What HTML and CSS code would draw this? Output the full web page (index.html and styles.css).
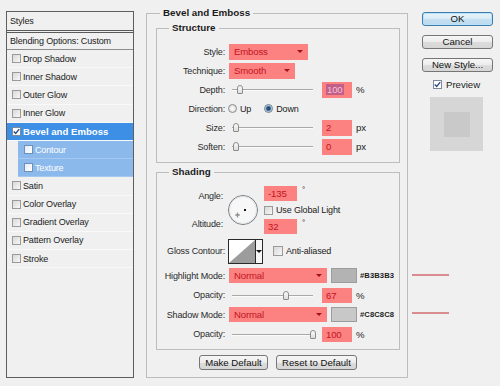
FILE: index.html
```html
<!DOCTYPE html>
<html>
<head>
<meta charset="utf-8">
<title>Layer Style</title>
<link rel="stylesheet" href="styles.css">
</head>
<body>
<div class="dialog">
  <aside class="styles-panel">
    <div class="panel-head">Styles</div>
    <div class="panel-blend">Blending Options: Custom</div>
    <ul class="effect-list">
      <li class="effect"><span class="cb"></span>Drop Shadow</li>
      <li class="effect"><span class="cb"></span>Inner Shadow</li>
      <li class="effect"><span class="cb"></span>Outer Glow</li>
      <li class="effect"><span class="cb"></span>Inner Glow</li>
      <li class="effect selected"><span class="cb checked"><svg viewBox="0 0 9 9" width="7" height="7"><path d="M1 4.5 L3.5 7 L8 1.5" fill="none" stroke="#2b4a86" stroke-width="1.8"/></svg></span>Bevel and Emboss</li>
      <li class="effect sub"><span class="cb light"></span>Contour</li>
      <li class="effect sub"><span class="cb light"></span>Texture</li>
      <li class="effect"><span class="cb"></span>Satin</li>
      <li class="effect"><span class="cb"></span>Color Overlay</li>
      <li class="effect"><span class="cb"></span>Gradient Overlay</li>
      <li class="effect"><span class="cb"></span>Pattern Overlay</li>
      <li class="effect"><span class="cb"></span>Stroke</li>
    </ul>
  </aside>

  <main class="main">
    <fieldset class="group bevel">
      <legend class="legend legend-outer">Bevel and Emboss</legend>

      <fieldset class="group structure">
        <legend class="legend">Structure</legend>
        <div class="row">
          <span class="lbl">Style:</span>
          <div class="select w-style"><span>Emboss</span><i class="arrow"></i></div>
        </div>
        <div class="row">
          <span class="lbl">Technique:</span>
          <div class="select w-tech"><span>Smooth</span><i class="arrow"></i></div>
        </div>
        <div class="row">
          <span class="lbl">Depth:</span>
          <div class="slider"><i class="thumb" style="left:5px"></i></div>
          <div class="field"><span class="sel">100</span></div><span class="unit">%</span>
        </div>
        <div class="row">
          <span class="lbl">Direction:</span>
          <span class="radio"></span><span class="radio-text">Up</span>
          <span class="radio checked gap-radio"></span><span class="radio-text">Down</span>
        </div>
        <div class="row">
          <span class="lbl">Size:</span>
          <div class="slider"><i class="thumb" style="left:1px"></i></div>
          <div class="field">2</div><span class="unit">px</span>
        </div>
        <div class="row">
          <span class="lbl">Soften:</span>
          <div class="slider"><i class="thumb" style="left:1px"></i></div>
          <div class="field">0</div><span class="unit">px</span>
        </div>
      </fieldset>

      <fieldset class="group shading">
        <legend class="legend">Shading</legend>
        <div class="shade-grid">
          <div class="angle">
            <span class="lbl a-lbl1">Angle:</span>
            <svg class="dial" viewBox="0 0 32 32" width="32" height="32">
              <circle cx="16" cy="16" r="14.5" fill="#f7f7f7" stroke="#707a84" stroke-width="1"/>
              <circle cx="16" cy="16" r="13.5" fill="none" stroke="#e2e2e2" stroke-width="1"/>
              <rect x="17" y="15" width="2" height="2" fill="#111"/>
              <path d="M10.5 18.5 V23.5 M8 21 H13" stroke="#8a8a8a" stroke-width="1"/>
              <circle cx="10.5" cy="21" r="1.3" fill="none" stroke="#9a9a9a" stroke-width="0.8"/>
            </svg>
            <div class="a-field1"><div class="field wide">-135</div><span class="deg">°</span></div>
            <div class="a-check"><span class="cb"></span><span>Use Global Light</span></div>
            <span class="lbl a-lbl2">Altitude:</span>
            <div class="a-field2"><div class="field wide">32</div><span class="deg">°</span></div>
          </div>

          <div class="row tall">
            <span class="lbl">Gloss Contour:</span>
            <div class="gloss">
              <svg viewBox="0 0 26 23" width="26" height="23" preserveAspectRatio="none"><rect width="26" height="23" fill="#fff"/><path d="M0 23 L26 0 L26 23 Z" fill="#9c9c9c"/></svg>
              <span class="gloss-drop"><i class="arrow dark"></i></span>
            </div>
            <span class="cb aa"></span><span>Anti-aliased</span>
          </div>

          <div class="row">
            <span class="lbl">Highlight Mode:</span>
            <div class="select w-mode"><span>Normal</span><i class="arrow"></i></div>
            <span class="swatch hl"></span><span class="hex">#B3B3B3</span>
          </div>
          <div class="row">
            <span class="lbl">Opacity:</span>
            <div class="slider"><i class="thumb" style="left:51px"></i></div>
            <div class="field">67</div><span class="unit">%</span>
          </div>
          <div class="row">
            <span class="lbl">Shadow Mode:</span>
            <div class="select w-mode"><span>Normal</span><i class="arrow"></i></div>
            <span class="swatch sh"></span><span class="hex">#C8C8C8</span>
          </div>
          <div class="row">
            <span class="lbl">Opacity:</span>
            <div class="slider"><i class="thumb" style="left:78px"></i></div>
            <div class="field">100</div><span class="unit">%</span>
          </div>
        </div>
      </fieldset>

      <div class="actions">
        <button class="btn b-make">Make Default</button>
        <button class="btn b-reset">Reset to Default</button>
      </div>
    </fieldset>
  </main>

  <div class="side">
    <button class="btn ok">OK</button>
    <button class="btn s-gap">Cancel</button>
    <button class="btn s-gap">New Style...</button>
    <div class="preview-row"><span class="cb checked white"><svg viewBox="0 0 9 9" width="7" height="7"><path d="M1 4.5 L3.5 7 L8 1.5" fill="none" stroke="#2b4a86" stroke-width="1.8"/></svg></span><span>Preview</span></div>
    <div class="preview"><div class="preview-inner"></div></div>
  </div>

  <i class="pointer p1"></i>
  <i class="pointer p2"></i>
</div>
</body>
</html>
```
FILE: styles.css
```css
* { box-sizing: border-box; }
html, body { margin: 0; padding: 0; }
body {
  width: 500px; height: 386px; overflow: hidden;
  background: #f0f0f0;
  font-family: "Liberation Sans", Arial, sans-serif;
  font-size: 9px; letter-spacing: -0.15px; color: #222;
}
.dialog { position: relative; display: flex; align-items: flex-start; height: 386px; }

/* ---- left styles panel ---- */
.styles-panel {
  margin: 11px 0 0 6px; width: 128px; height: 367px;
  border: 1px solid #5e5e5e; background: #f0f0f0;
}
.panel-head { height: 21px; line-height: 18px; padding-left: 3px; border-bottom: 3px double #5a5a5a; }
.panel-blend { height: 17px; line-height: 16px; padding-left: 3px; border-bottom: 1px solid #8c8c8c; }
.effect-list { list-style: none; margin: 0; padding: 0; }
.effect {
  height: 18.2px; display: flex; align-items: center; padding-left: 5px;
  border-bottom: 1px solid #f9f9f9; white-space: nowrap;
}
.effect.selected { background: #3d8fe6; color: #fff; font-weight: bold; font-size: 9.6px; letter-spacing: 0; }
.effect.sub { margin-left: 11px; padding-left: 6px; background: #8cb9eb; color: #fff; border-bottom-color: #a4c8f0; }
.cb {
  flex: none; width: 9px; height: 9px; margin-right: 2px;
  border: 1px solid #9a9a9a;
  background: linear-gradient(135deg, #d8d8d8, #f7f7f7);
  display: inline-flex; align-items: center; justify-content: center;
}
.cb.checked { background: #fff; border-color: #7c8a99; }
.cb.light { background: linear-gradient(135deg, #e4ecf6, #ffffff); border-color: #6f8fb8; }

/* ---- main group ---- */
.group { margin: 0; min-width: 0; border: 1px solid #bdbdbd; }
.legend { font-weight: bold; font-size: 9.8px; letter-spacing: 0; padding: 0 3px; margin-left: 12px; line-height: 12px; color: #1c1c1c; }
.legend-outer { margin-left: 4px; }
.bevel { margin: 7px 0 0 12px; width: 262px; height: 371px; padding: 3px 7px 0 9px; }
.structure { width: 244px; height: 141px; padding: 8px 0 0 0; }
.shading { width: 244px; height: 184px; margin-top: 3px; padding: 8px 0 0 0; }

.row { display: flex; align-items: center; height: 19px; white-space: nowrap; }
.shade-grid .row { height: 15px; }
.shade-grid .row.tall { height: 25px; }
.shade-grid { display: flex; flex-direction: column; gap: 4.5px; }
.lbl { flex: none; width: 68px; margin-right: 4px; text-align: right; color: #2a2a2a; }

.select {
  flex: none; height: 16px; display: flex; align-items: center; justify-content: space-between;
  padding: 0 5px 0 5px; background: #fc8181; color: #c4141e; font-size: 9.6px;
}
.shade-grid .select { height: 15px; }
.w-style { width: 79px; }
.w-tech { width: 66px; }
.w-mode { width: 98px; }
.arrow { display: block; width: 0; height: 0; border-left: 3px solid transparent; border-right: 3px solid transparent; border-top: 3px solid #a2101a; }
.arrow.dark { border-top-color: #111; }

.slider { position: relative; flex: none; width: 81px; height: 11px; margin: 0 9px 0 3px; }
.slider::before { content: ""; position: absolute; left: 0; right: 0; top: 5px; height: 1px; background: #a9a9a9; box-shadow: 0 1px 0 #fbfbfb; }
.thumb {
  position: absolute; top: 1px; width: 6px; height: 9px;
  border: 1px solid #8c8c8c; border-radius: 3px 3px 1px 1px;
  background: linear-gradient(#fbfbfb, #dedede);
}
.field {
  flex: none; width: 30px; height: 15px; padding-left: 4px;
  display: flex; align-items: center; background: #fc8181; color: #c4141e; font-size: 9.6px;
}
.structure .field { height: 16px; }
.field.wide { width: 33px; }
.sel { background: #c0608a; color: #f6bfd0; padding: 0 1px; line-height: 11px; }
.unit { margin-left: 4px; font-size: 9.6px; color: #222; }
.deg { margin-left: 5px; align-self: flex-start; font-size: 8px; line-height: 8px; }

.radio {
  flex: none; width: 9px; height: 9px; border-radius: 50%;
  border: 1px solid #8b8b8b; background: radial-gradient(circle, #fff, #d4d4d4);
  margin-left: -1px;
}
.radio.checked { background: radial-gradient(circle, #234f78 0 1.8px, #6f93b3 2.4px, #e9eef3 3.6px); border-color: #6d7f90; }
.gap-radio { margin-left: 13px; }
.radio-text { margin-left: 3px; }

/* angle block */
.angle { display: grid; grid-template-columns: 70px 37px auto; grid-template-rows: 15px 18px 15px; align-items: center; }
.angle .lbl { width: 70px; margin: 0; padding-right: 4px; }
.a-lbl1 { grid-column: 1; grid-row: 1; align-self: end; }
.a-lbl2 { grid-column: 1; grid-row: 3; align-self: start; }
.dial { grid-column: 2; grid-row: 1 / 4; align-self: center; }
.a-field1 { grid-column: 3; grid-row: 1; display: flex; height: 15px; }
.a-check { grid-column: 3; grid-row: 2; display: flex; align-items: center; white-space: nowrap; }
.a-check .cb { margin-right: 3px; }
.a-field2 { grid-column: 3; grid-row: 3; display: flex; height: 15px; }

.gloss { flex: none; display: flex; width: 35px; height: 25px; border: 1px solid #2a2a2a; background: #fff; margin-left: -1px; }
.gloss svg { display: block; }
.gloss-drop { flex: 1; display: flex; align-items: center; justify-content: center; border-left: 1px solid #2a2a2a; background: #f6f6f6; }
.cb.aa { margin-left: 10px; margin-right: 3px; width: 10px; height: 10px; }

.swatch { flex: none; width: 26px; height: 15px; margin-left: 4px; border: 1px solid #9c9c9c; }
.swatch.hl { background: #b3b3b3; }
.swatch.sh { background: #c8c8c8; }
.hex { margin-left: 3px; font-weight: bold; font-size: 7.6px; letter-spacing: 0.1px; color: #1c1c1c; }

.actions { display: flex; justify-content: center; gap: 8px; margin-top: 5px; }

/* buttons */
.btn {
  height: 14px; padding: 0; margin: 0;
  border: 1px solid #767676; border-radius: 3px;
  background: linear-gradient(#f6f6f6 0, #ececec 50%, #dcdcdc 51%, #d6d6d6 100%);
  font-family: "Liberation Sans", Arial, sans-serif; font-size: 9.6px; letter-spacing: 0; color: #111;
  line-height: 12px;
}
.b-make { width: 69px; height: 15px; }
.b-reset { width: 81px; height: 15px; }

.side { width: 71px; margin: 12px 0 0 14px; display: flex; flex-direction: column; }
.side .btn { width: 71px; }
.btn.ok { border-color: #3d7cad; background: linear-gradient(#eaf4fa 0, #d9ebf6 50%, #c5e0f1 51%, #bcdaee 100%); box-shadow: inset 0 0 0 1px #b8e2f8; }
.s-gap { margin-top: 9px; }
.preview-row { display: flex; align-items: center; height: 11px; margin-top: 7px; padding-left: 11px; font-size: 9.6px; letter-spacing: 0; }
.preview-row .cb { margin-right: 4px; }
.preview { width: 53px; height: 54px; margin: 7px 0 0 8px; background: #d6d6d6; display: flex; align-items: center; justify-content: center; }
.preview-inner { width: 26px; height: 25px; background: #c9c9c9; }

/* annotation pointers */
.pointer { position: absolute; left: 412px; width: 37px; height: 2px; background: #d88c90; }
.p1 { top: 274px; }
.p2 { top: 312px; }
```
